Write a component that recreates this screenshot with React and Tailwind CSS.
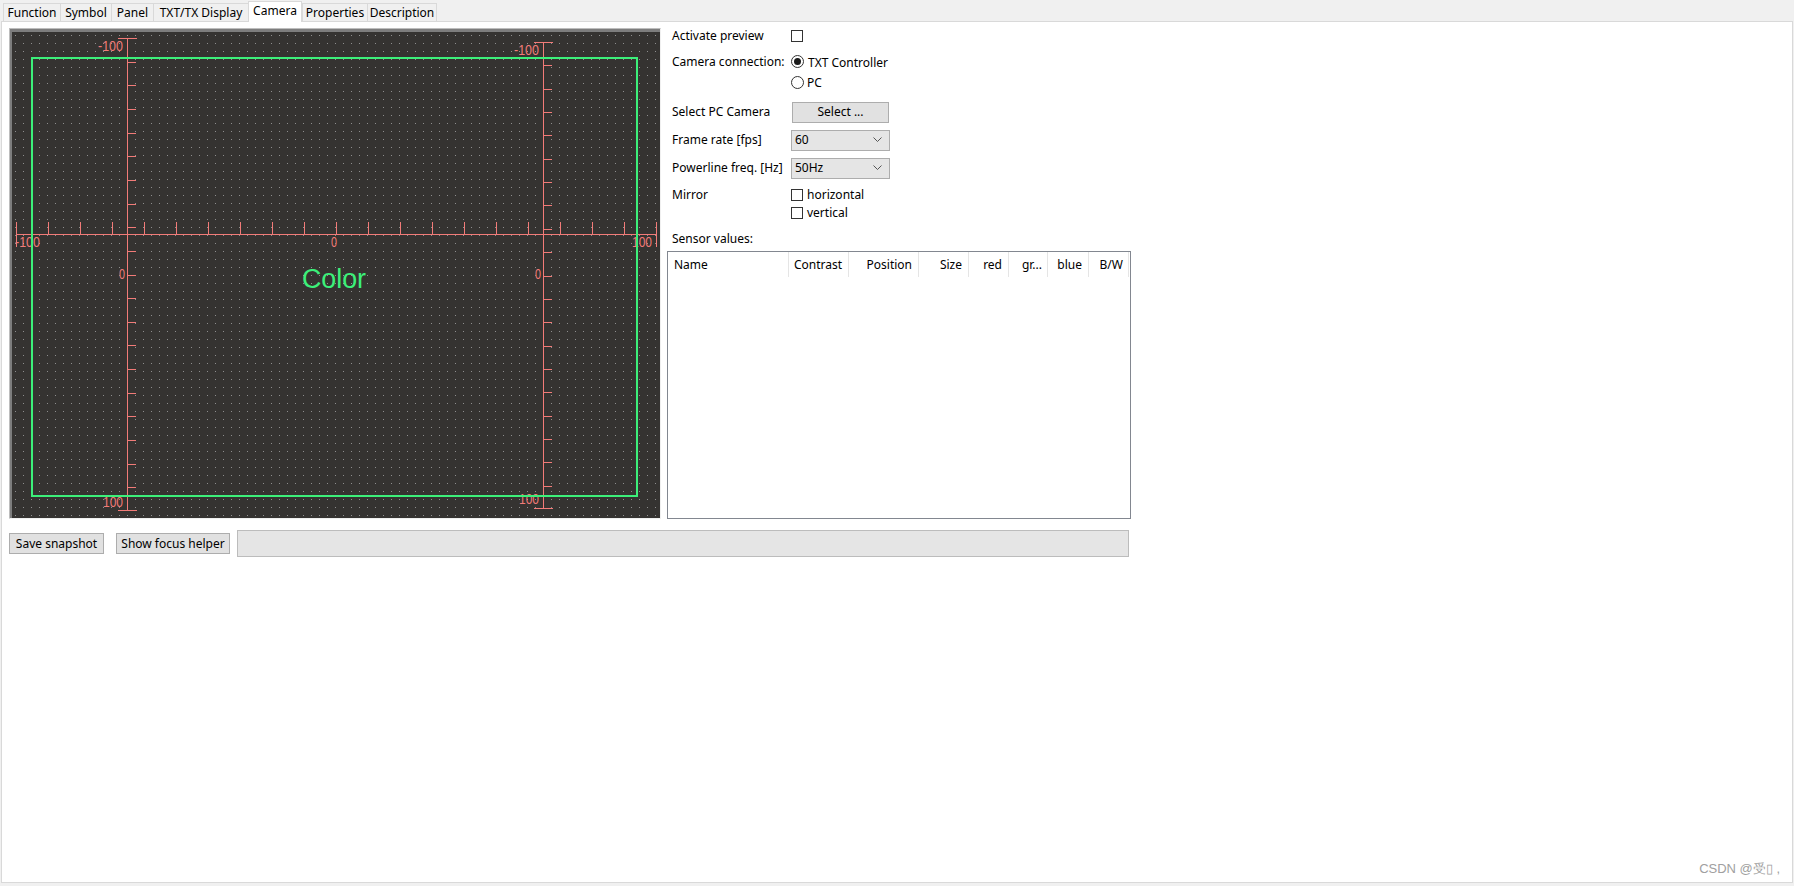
import React from 'react';

const AXIS = '#f27b78';
const GREEN = '#3cf07a';

const tabs = [
  ['Function', 'w-[57px]'],
  ['Symbol', 'w-[51px]'],
  ['Panel', 'w-[42px]'],
  ['TXT/TX Display', 'w-[95px]'],
  ['Camera', 'w-[54px]'],
  ['Properties', 'w-[65px]'],
  ['Description', 'w-[70px]'],
];

function Tabs() {
  return (
    <div className="flex h-[21px] items-end pl-[2px]">
      {tabs.map(([label, w], i) => {
        const active = label === 'Camera';
        return (
          <div
            key={label}
            className={`${w} flex items-center justify-center border-l border-t border-[#d9d9d9] text-[12px] leading-none ${
              active ? 'relative z-10 -mb-px h-[21px] border-r bg-white pb-[2px]' : 'h-[18px] bg-[#f0f0f0]'
            } ${i === tabs.length - 1 ? 'border-r' : ''}`}
          >
            {label}
          </div>
        );
      })}
    </div>
  );
}

const px = (v) => Math.round(v) + 0.5;

function Label({ x, y, anchor = 'start', len, children }) {
  return (
    <text
      x={x}
      y={y}
      textAnchor={anchor}
      fill={AXIS}
      fontSize="14"
      fontFamily="Liberation Sans, Arial, sans-serif"
      textLength={len}
      lengthAdjust="spacingAndGlyphs"
    >
      {children}
    </text>
  );
}

function Preview() {
  const leftTicks = Array.from({ length: 19 }, (_, k) => 38 + 23.65 * (k + 1));
  const rightTicks = Array.from({ length: 19 }, (_, k) => 42 + 23.35 * (k + 1));
  const hTicks = Array.from({ length: 19 }, (_, k) => 16 + 32 * (k + 1));

  return (
    <svg width="648" height="486" viewBox="12 32 648 486" className="block" shapeRendering="crispEdges">
      <defs>
        <pattern id="dots" x="15" y="35" width="8" height="8" patternUnits="userSpaceOnUse">
          <rect x="0" y="0" width="1" height="1" fill="#8e8e8e" />
        </pattern>
      </defs>
      <rect x="12" y="32" width="648" height="486" fill="#353331" />
      <rect x="12" y="32" width="648" height="486" fill="url(#dots)" />

      {/* left vertical axis */}
      <g stroke={AXIS} strokeWidth="1">
        <line x1="127.5" y1="38" x2="127.5" y2="511" />
        <line x1="118" y1="38.5" x2="137" y2="38.5" />
        <line x1="118" y1="510.5" x2="137" y2="510.5" />
        {leftTicks.map((y) => (
          <line key={'l' + y} x1="127" y1={px(y)} x2="136" y2={px(y)} />
        ))}
      </g>

      {/* right vertical axis */}
      <g stroke={AXIS} strokeWidth="1">
        <line x1="543.5" y1="42" x2="543.5" y2="509" />
        <line x1="534" y1="42.5" x2="553" y2="42.5" />
        <line x1="534" y1="508.5" x2="553" y2="508.5" />
        {rightTicks.map((y) => (
          <line key={'r' + y} x1="543" y1={px(y)} x2="552" y2={px(y)} />
        ))}
      </g>

      {/* horizontal axis */}
      <g stroke={AXIS} strokeWidth="1">
        <line x1="16" y1="234.5" x2="657" y2="234.5" />
        <line x1="16.5" y1="222" x2="16.5" y2="247" />
        <line x1="656.5" y1="222" x2="656.5" y2="247" />
        {hTicks.map((x) => (
          <line key={'h' + x} x1={px(x)} y1="222" x2={px(x)} y2="234" />
        ))}
      </g>

      <g shapeRendering="auto">
        <Label x={123} y={51} anchor="end" len={25}>-100</Label>
        <Label x={125} y={279} anchor="end" len={6}>0</Label>
        <Label x={123} y={507} anchor="end" len={20}>100</Label>

        <Label x={539} y={55} anchor="end" len={25}>-100</Label>
        <Label x={541} y={279} anchor="end" len={6}>0</Label>
        <Label x={539} y={504} anchor="end" len={20}>100</Label>

        <Label x={15} y={247} len={25}>-100</Label>
        <Label x={334} y={247} anchor="middle" len={6}>0</Label>
        <Label x={652} y={247} anchor="end" len={20}>100</Label>
      </g>

      <rect x="32" y="58" width="605" height="438" fill="none" stroke={GREEN} strokeWidth="2" />

      <text
        x="302"
        y="288"
        fill={GREEN}
        fontSize="27"
        fontFamily="Liberation Sans, Arial, sans-serif"
        textLength="64"
        lengthAdjust="spacingAndGlyphs"
        shapeRendering="auto"
      >
        Color
      </text>
    </svg>
  );
}

function Checkbox() {
  return <span className="block h-[12px] w-[12px] border border-[#333] bg-white" />;
}

function Radio({ checked }) {
  return (
    <span className="flex h-[13px] w-[13px] items-center justify-center rounded-full border border-[#333] bg-white">
      {checked && <span className="block h-[7px] w-[7px] rounded-full bg-[#1a1a1a]" />}
    </span>
  );
}

function Combo({ value }) {
  return (
    <div className="flex h-[21px] w-[99px] items-center justify-between border border-[#adadad] bg-[#e5e5e5] pl-[3px] pr-[7px]">
      <span>{value}</span>
      <svg width="9" height="6" viewBox="0 0 9 6">
        <polyline points="0.5,0.5 4.5,4.5 8.5,0.5" fill="none" stroke="#555" strokeWidth="1" />
      </svg>
    </div>
  );
}

const columns = [
  ['Name', 'w-[121px] justify-start pl-[6px]'],
  ['Contrast', 'w-[60px] justify-end pr-[6px]'],
  ['Position', 'w-[70px] justify-end pr-[6px]'],
  ['Size', 'w-[50px] justify-end pr-[6px]'],
  ['red', 'w-[40px] justify-end pr-[6px]'],
  ['gr...', 'w-[39px] justify-end pr-[5px]'],
  ['blue', 'w-[41px] justify-end pr-[6px]'],
  ['B/W', 'w-[40px] justify-end pr-[5px]'],
];

function RightPanel() {
  return (
    <div className="ml-[6px] flex w-[464px] flex-col pt-[4px]">
      <div className="flex h-[19px] items-center pl-[5px]">
        <span className="w-[119px]">Activate preview</span>
        <Checkbox />
      </div>
      <div className="mt-[7px] flex h-[19px] items-center pl-[5px]">
        <span className="w-[119px]">Camera connection:</span>
        <Radio checked />
        <span className="ml-[4px] mt-[2px]">TXT Controller</span>
      </div>
      <div className="mt-[2px] flex h-[19px] items-center pl-[124px]">
        <Radio />
        <span className="ml-[3px]">PC</span>
      </div>
      <div className="mt-[9px] flex h-[22px] items-center pl-[5px]">
        <span className="w-[120px]">Select PC Camera</span>
        <button type="button" className="flex h-[21px] w-[97px] items-center justify-center border border-[#adadad] bg-[#e1e1e1]">
          Select ...
        </button>
      </div>
      <div className="mt-[6px] flex h-[22px] items-center pl-[5px]">
        <span className="w-[119px]">Frame rate [fps]</span>
        <Combo value="60" />
      </div>
      <div className="mt-[6px] flex h-[22px] items-center pl-[5px]">
        <span className="w-[119px]">Powerline freq. [Hz]</span>
        <Combo value="50Hz" />
      </div>
      <div className="mt-[7px] flex h-[18px] items-center pl-[5px]">
        <span className="w-[119px]">Mirror</span>
        <Checkbox />
        <span className="ml-[4px]">horizontal</span>
      </div>
      <div className="flex h-[18px] items-center pl-[124px]">
        <Checkbox />
        <span className="ml-[4px]">vertical</span>
      </div>
      <div className="mt-[8px] flex h-[18px] items-center pl-[5px]">Sensor values:</div>
      <div className="mt-[3px] h-[268px] w-[464px] border border-[#828790] bg-white">
        <div className="flex h-[25px]">
          {columns.map(([label, cls]) => (
            <div key={label} className={`${cls} flex items-center border-r border-[#e5e5e5]`}>
              {label}
            </div>
          ))}
        </div>
      </div>
    </div>
  );
}

export default function App() {
  return (
    <div className="relative h-[886px] w-full overflow-hidden bg-[#f0f0f0] px-px font-['Noto_Sans',sans-serif] text-[12px] text-black">
      <Tabs />
      <div className="h-[862px] border border-[#d9d9d9] bg-white pl-[7px]">
        <div className="flex items-start">
          <div className="mt-[6px] border-b border-l border-r border-t border-b-[#f0f0f0] border-l-[#bdbdbd] border-r-[#f0f0f0] border-t-[#bdbdbd]">
            <div className="border-l-2 border-t-[3px] border-[#7d7d7d]">
              <Preview />
            </div>
          </div>
          <RightPanel />
        </div>

        <div className="mt-[11px] flex h-[27px] items-center">
          <button type="button" className="flex h-[21px] w-[95px] items-center justify-center border border-[#adadad] bg-[#e1e1e1]">
            Save snapshot
          </button>
          <button type="button" className="ml-[12px] flex h-[21px] w-[114px] items-center justify-center border border-[#adadad] bg-[#e1e1e1]">
            Show focus helper
          </button>
          <div className="ml-[7px] h-[27px] w-[892px] border border-[#bcbcbc] bg-[#e5e5e5]" />
        </div>
      </div>

      <div className="absolute bottom-[8px] right-[14px] font-['Liberation_Sans',sans-serif] text-[13px] text-[#a0a0a0]">
        CSDN @受▯ ,
      </div>
    </div>
  );
}
